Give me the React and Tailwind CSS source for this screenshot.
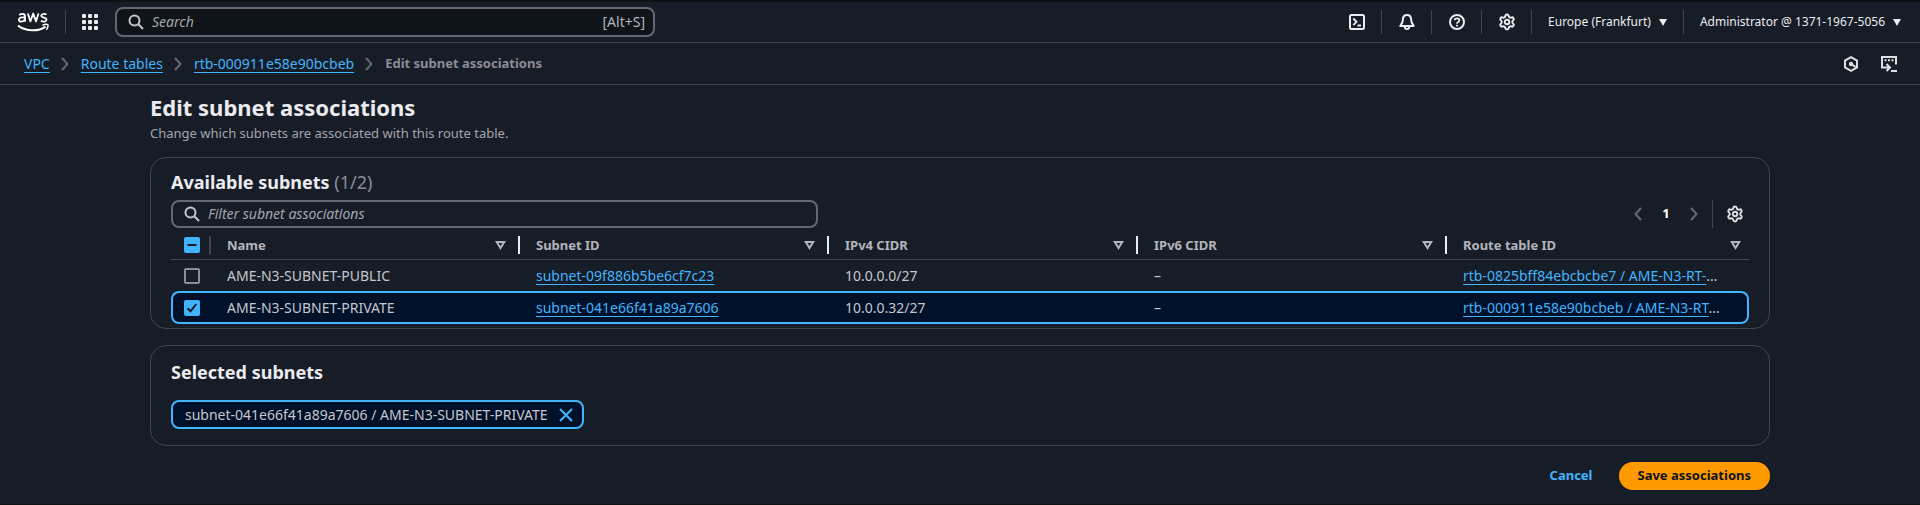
import { Settings } from "lucide-react";

const subnets = [
  {
    name: "AME-N3-SUBNET-PUBLIC",
    id: "subnet-09f886b5be6cf7c23",
    ipv4: "10.0.0.0/27",
    ipv6: "–",
    routeTable: "rtb-0825bff84ebcbcbe7 / AME-N3-RT-",
    selected: false,
  },
  {
    name: "AME-N3-SUBNET-PRIVATE",
    id: "subnet-041e66f41a89a7606",
    ipv4: "10.0.0.32/27",
    ipv6: "–",
    routeTable: "rtb-000911e58e90bcbeb / AME-N3-RT",
    selected: true,
  },
];

const columns = ["Name", "Subnet ID", "IPv4 CIDR", "IPv6 CIDR", "Route table ID"];

const linkClass =
  "text-[#42b4ff] underline underline-offset-[3px] decoration-1 [text-decoration-skip-ink:none]";

function Icon({ children, className = "" }) {
  return (
    <svg
      viewBox="0 0 16 16"
      aria-hidden="true"
      className={`size-4 shrink-0 fill-none stroke-current stroke-2 ${className}`}
    >
      {children}
    </svg>
  );
}

function AwsLogo() {
  return (
    <svg viewBox="0 0 32 20" role="img" aria-label="AWS" className="h-5 w-8 fill-none stroke-current">
      <g strokeWidth="1.8" strokeLinejoin="round">
        <path d="M2.2 3.1C3 2.3 4.2 1.9 5.4 1.9c1.7 0 2.6.8 2.6 2.4v5.4M8 5.5C4.2 5 1.9 5.7 1.9 7.8c0 2.6 4.6 2.5 6.1-.4" />
        <path d="M10.900 1.500l2.500 7.900 2.800-7.900 2.800 7.900 2.500-7.900" />
        <path d="M29.600 2.500c-2.200-1-5.400-.7-5.400 1.300 0 2.200 5.400 1.200 5.400 3.800 0 2.200-3.400 2.500-5.700 1.300" />
      </g>
      <path d="M1 13.600c8.500 6.200 20.500 6.100 27.600 1" strokeWidth="2" />
      <path d="M25.500 13.200c2-.8 4.700-1 5.300-.4.500.6 0 3.200-1.500 4.900" strokeWidth="1.500" />
    </svg>
  );
}

function SearchIcon() {
  return (
    <Icon>
      <circle cx="6.500" cy="6.500" r="5" />
      <path d="m10.300 10.300 4.700 4.700" />
    </Icon>
  );
}

function Chevron({ left = false }) {
  return (
    <Icon className="text-[#656871]">
      <path d={left ? "M11 2 5.500 8l5.500 6" : "M5 2l5.500 6L5 14"} />
    </Icon>
  );
}

function Caret() {
  return (
    <svg viewBox="0 0 8 7" aria-hidden="true" className="h-[7px] w-2 fill-current">
      <path d="M0 0h8L4 7z" />
    </svg>
  );
}

function SortIcon() {
  return (
    <svg viewBox="0 0 11 9" aria-hidden="true" className="h-[9px] w-[11px] fill-none stroke-current stroke-2">
      <path d="M1.800 1h7.400L5.500 7z" />
    </svg>
  );
}

function Checkbox({ state, label }) {
  const on = state !== "off";
  return (
    <span className="relative block size-4">
      <input
        type="checkbox"
        aria-label={label}
        defaultChecked={state === "on"}
        className={
          on
            ? "block size-4 appearance-none rounded-[2px] bg-[#42b4ff]"
            : "block size-4 appearance-none rounded-[2px] border-2 border-[#8c8c94] bg-[#161d26]"
        }
      />
      {on && (
        <svg
          viewBox="0 0 16 16"
          aria-hidden="true"
          className="pointer-events-none absolute inset-0 size-4 fill-none stroke-[#161d26] stroke-2"
        >
          <path d={state === "on" ? "M3.500 8.300l3 3L12.300 4" : "M3.500 8h9"} />
        </svg>
      )}
    </span>
  );
}

function Separator() {
  return <span className="h-6 w-px bg-[#424650]" />;
}

function ToolButton({ label, children }) {
  return (
    <>
      <button type="button" aria-label={label} className="flex w-[49px] justify-center">
        {children}
      </button>
      <Separator />
    </>
  );
}

function TopBar() {
  return (
    <header className="flex h-[43px] items-center justify-between border-t-2 border-b border-t-[#101114] border-b-[#424650] text-[#ebebf0]">
      <div className="flex items-center">
        <a href="#home" className="ml-[17px] text-white">
          <AwsLogo />
        </a>
        <span className="ml-4 flex">
          <Separator />
        </span>
        <button type="button" aria-label="Services" className="ml-4">
          <svg viewBox="0 0 16 16" aria-hidden="true" className="size-4 fill-current">
            {[0, 6, 12].map((y) =>
              [0, 6, 12].map((x) => <rect key={`${x}-${y}`} x={x} y={y} width="4" height="4" rx="1" />)
            )}
          </svg>
        </button>
        <label className="ml-[17px] flex h-[30px] w-[540px] items-center gap-2 rounded-lg border-2 border-[#656871] bg-[#0f141a] pr-2 pl-[11px] text-[#c6c6cd]">
          <SearchIcon />
          <input
            type="search"
            aria-label="Search"
            placeholder="Search"
            className="min-w-0 flex-1 bg-transparent text-sm italic outline-none placeholder:text-[#a4a4ad]"
          />
          <span className="text-sm text-[#b4b4bb]">[Alt+S]</span>
        </label>
      </div>
      <div className="flex items-center">
        <ToolButton label="CloudShell">
          <Icon>
            <rect x="1" y="1" width="14" height="14" rx="1.500" />
            <path d="M4.300 4.500 7.500 7.800l-3.200 3.300M8.500 11.500H12" strokeWidth="1.800" />
          </Icon>
        </ToolButton>
        <ToolButton label="Notifications">
          <Icon>
            <path d="M8 1C5.300 1 3.900 3 3.900 5.500 3.900 8.500 3 9.900 1.300 12h13.400c-1.700-2.100-2.600-3.500-2.600-6.500C12.100 3 10.700 1 8 1z" strokeLinejoin="round" />
            <path d="M5.800 12.500C5.800 14 6.700 15 8 15s2.200-1 2.200-2.500" />
          </Icon>
        </ToolButton>
        <ToolButton label="Help">
          <Icon>
            <circle cx="8" cy="8" r="7" />
            <path d="M5.700 6.300C5.700 3.600 10.400 3.700 10.400 6.300c0 1.600-2.400 1.700-2.400 3.400M8 10.800v1.800" strokeWidth="1.800" />
          </Icon>
        </ToolButton>
        <ToolButton label="Settings">
          <Settings size={18} strokeWidth={2.6} />
        </ToolButton>
        <button type="button" className="flex items-center gap-2 px-4 text-xs">
          Europe (Frankfurt) <Caret />
        </button>
        <Separator />
        <button type="button" className="flex items-center gap-2 pr-[19px] pl-4 text-xs">
          Administrator @ 1371-1967-5056 <Caret />
        </button>
      </div>
    </header>
  );
}

function Breadcrumbs() {
  return (
    <div className="flex h-[42px] items-center justify-between border-b border-[#424650] pr-[23px] pl-6">
      <nav aria-label="Breadcrumbs">
        <ol className="flex items-center gap-2 text-sm">
          {["VPC", "Route tables", "rtb-000911e58e90bcbeb"].map((label) => (
            <li key={label} className="flex items-center gap-[7px]">
              <a href="#crumb" className={linkClass}>
                {label}
              </a>
              <Chevron />
            </li>
          ))}
          <li className="text-[13px] font-bold text-[#8c8c94]">Edit subnet associations</li>
        </ol>
      </nav>
      <div className="flex gap-[22px] text-[#dedee3]">
        <button type="button" aria-label="Assistant">
          <Icon>
            <path d="M8 1.200l6 3.400v6.800l-6 3.400-6-3.400V4.600z" />
            <path d="M8 8l4.500 2.800" />
            <circle cx="8" cy="8" r="1.200" />
          </Icon>
        </button>
        <button type="button" aria-label="Console">
          <Icon>
            <path d="M5 11.500H1V1h14v7.500M10 15h6M0 11.500h8.300M5.500 8l3.500 3.500L5.500 15" />
            <path d="M3.500 4.200h2M7 4.200h2M10.500 4.200h2" />
          </Icon>
        </button>
      </div>
    </div>
  );
}

function SubnetTable() {
  return (
    <table className="w-full table-fixed border-separate border-spacing-0 text-left text-sm text-[#c6c6cd]">
      <colgroup>
        <col className="w-10" />
        <col />
        <col />
        <col />
        <col />
        <col className="w-[302px]" />
      </colgroup>
      <thead>
        <tr className="h-8 text-[13px] text-[#b4b4bb]">
          <th className="border-b border-[#424650] p-0 pt-[3px] pl-[13px]">
            <div className="flex items-center justify-between">
              <Checkbox state="mixed" label="Select all subnets" />
              <span className="h-[18px] w-0.5 bg-[#424650]" />
            </div>
          </th>
          {columns.map((column, i) => (
            <th key={column} className="border-b border-[#424650] p-0 pt-[3px] pl-4">
              <div className="flex items-center gap-3">
                <span className="flex-1">{column}</span>
                <SortIcon />
                {i < columns.length - 1 ? (
                  <span className="h-[18px] w-0.5 bg-[#ebebf0]" />
                ) : (
                  <span className="-ml-3 w-2" />
                )}
              </div>
            </th>
          ))}
        </tr>
      </thead>
      <tbody>
        {subnets.map((s) => {
          const mid = s.selected ? "border-y-2 border-[#42b4ff] bg-[#001129] p-0 pl-4" : "p-0 pl-4";
          const first = s.selected
            ? "rounded-l-lg border-2 border-r-0 border-[#42b4ff] bg-[#001129] p-0 pl-[11px]"
            : "p-0 pl-[13px]";
          const last = s.selected
            ? "rounded-r-lg border-2 border-l-0 border-[#42b4ff] bg-[#001129] p-0 pl-4"
            : "p-0 pl-4";
          return (
            <tr key={s.id} className={s.selected ? "h-[33px]" : "h-[31px]"}>
              <td className={first}>
                <Checkbox state={s.selected ? "on" : "off"} label={`Select ${s.name}`} />
              </td>
              <td className={mid}>{s.name}</td>
              <td className={mid}>
                <a href="#subnet" className={linkClass}>
                  {s.id}
                </a>
              </td>
              <td className={mid}>{s.ipv4}</td>
              <td className={mid}>{s.ipv6}</td>
              <td className={`${last} whitespace-nowrap`}>
                <a href="#route-table" className={linkClass}>
                  {s.routeTable}
                </a>
                …
              </td>
            </tr>
          );
        })}
      </tbody>
    </table>
  );
}

export default function App() {
  return (
    <div className="min-h-screen border-b border-[#101114] bg-[#161d26] font-['Noto_Sans',sans-serif] text-[#c6c6cd]">
      <TopBar />
      <Breadcrumbs />
      <main className="mx-auto flex w-[84.375%] flex-col pt-2">
        <h1 className="text-[22px] leading-7 font-bold text-[#ebebf0]">Edit subnet associations</h1>
        <p className="mt-0.5 text-[13px] leading-5 text-[#a4a4ad]">
          Change which subnets are associated with this route table.
        </p>

        <section className="mt-3.5 rounded-2xl border border-[#424650] px-5 pt-3 pb-1">
          <h2 className="text-lg leading-6 font-bold text-[#ebebf0]">
            Available subnets <span className="font-normal text-[#8c8c94]">(1/2)</span>
          </h2>
          <div className="mt-1.5 flex items-center justify-between">
            <label className="flex h-7 w-[41%] items-center gap-2 rounded-lg border-2 border-[#656871] pr-2 pl-[11px]">
              <SearchIcon />
              <input
                type="search"
                aria-label="Filter subnet associations"
                placeholder="Filter subnet associations"
                className="min-w-0 flex-1 bg-transparent text-sm italic outline-none placeholder:text-[#a4a4ad]"
              />
            </label>
            <div className="flex items-center pr-[5px]">
              <button type="button" aria-label="Previous page">
                <Chevron left />
              </button>
              <button type="button" aria-current="page" className="w-10 text-[13px] font-bold text-white">
                1
              </button>
              <button type="button" aria-label="Next page">
                <Chevron />
              </button>
              <span className="mr-[13px] ml-2.5 h-7 w-px bg-[#424650]" />
              <button type="button" aria-label="Preferences" className="text-[#dedee3]">
                <Settings size={18} strokeWidth={2.6} />
              </button>
            </div>
          </div>
          <SubnetTable />
        </section>

        <section className="mt-4 rounded-2xl border border-[#424650] px-5 pt-3.5 pb-4">
          <h2 className="text-lg leading-6 font-bold text-[#ebebf0]">Selected subnets</h2>
          <div className="mt-4 flex">
            <span className="flex h-[29px] items-center gap-2.5 rounded-lg border-2 border-[#42b4ff] bg-[#001129] pr-2 pl-3 text-sm">
              subnet-041e66f41a89a7606 / AME-N3-SUBNET-PRIVATE
              <button type="button" aria-label="Remove subnet" className="text-[#42b4ff]">
                <Icon>
                  <path d="M2 2l12 12M14 2 2 14" />
                </Icon>
              </button>
            </span>
          </div>
        </section>

        <div className="mt-4 flex items-center justify-end gap-[26px] text-[13px] font-bold">
          <button type="button" className="text-[#42b4ff]">
            Cancel
          </button>
          <button type="button" className="h-7 rounded-full bg-[#ff9900] px-[19px] text-[#0f141a]">
            Save associations
          </button>
        </div>
      </main>
    </div>
  );
}
